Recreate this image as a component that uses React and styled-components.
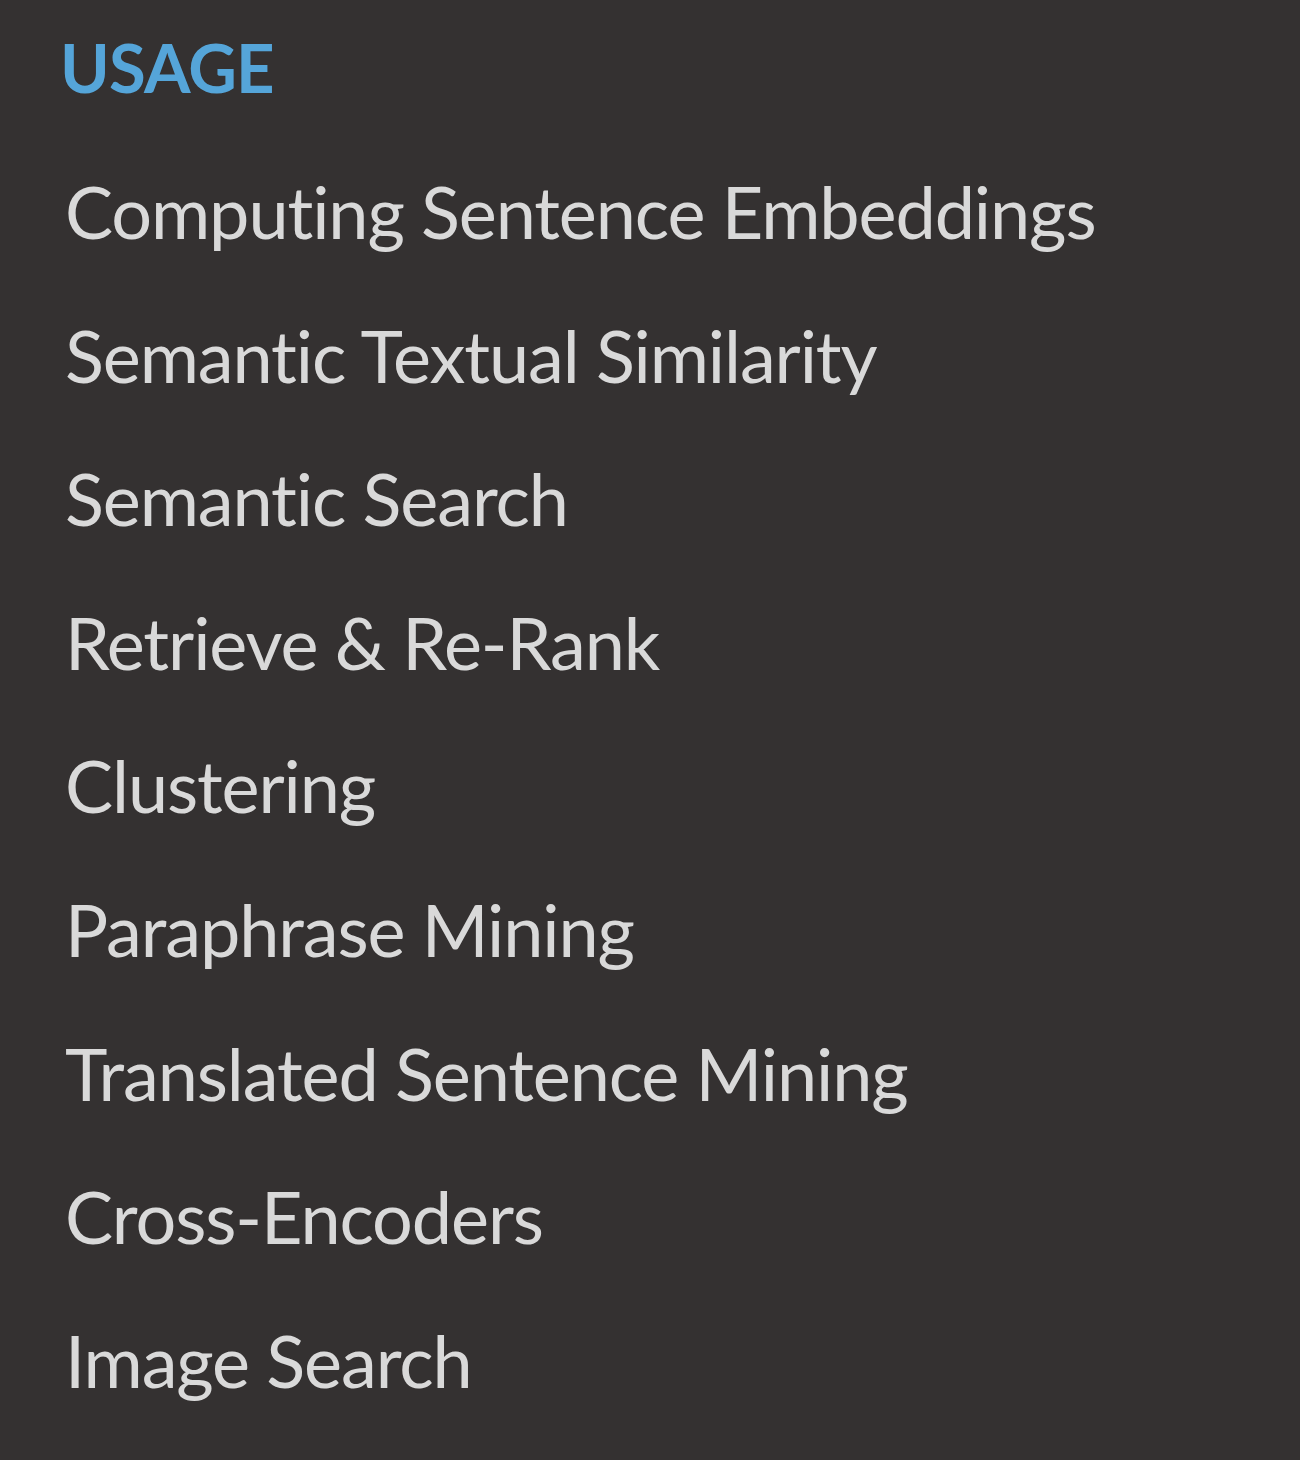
import React from "react";
import styled, { createGlobalStyle } from "styled-components";

const Global = createGlobalStyle`
  html, body { margin: 0; padding: 0; background: #343131; }
  body { font-family: Lato, "Noto Sans", sans-serif; }
`;

const Sidebar = styled.nav`
  width: 1300px;
  min-height: 1460px;
  box-sizing: border-box;
  background: #343131;
  padding: 17px 0 0 60px;
  display: flex;
  flex-direction: column;
`;

const Caption = styled.p`
  margin: 0;
  height: 123px;
  line-height: 100px;
  font-size: 67px;
  font-weight: 700;
  color: #55a5d9;
  text-transform: uppercase;
  letter-spacing: -0.8px;
`;

const List = styled.ul`
  list-style: none;
  margin: 0;
  padding: 0 0 0 5px;
  display: flex;
  flex-direction: column;
`;

const Item = styled.li`
  height: 143.6px;
  line-height: 143.6px;
  font-size: 72px;
  letter-spacing: -1.1px;
  color: #d9d9d9;
  white-space: nowrap;
`;

const items = [
  "Computing Sentence Embeddings",
  "Semantic Textual Similarity",
  "Semantic Search",
  "Retrieve & Re-Rank",
  "Clustering",
  "Paraphrase Mining",
  "Translated Sentence Mining",
  "Cross-Encoders",
  "Image Search",
];

export default function App() {
  return (
    <>
      <Global />
      <Sidebar>
        <Caption>Usage</Caption>
        <List>
          {items.map((t) => (
            <Item key={t}>{t}</Item>
          ))}
        </List>
      </Sidebar>
    </>
  );
}
